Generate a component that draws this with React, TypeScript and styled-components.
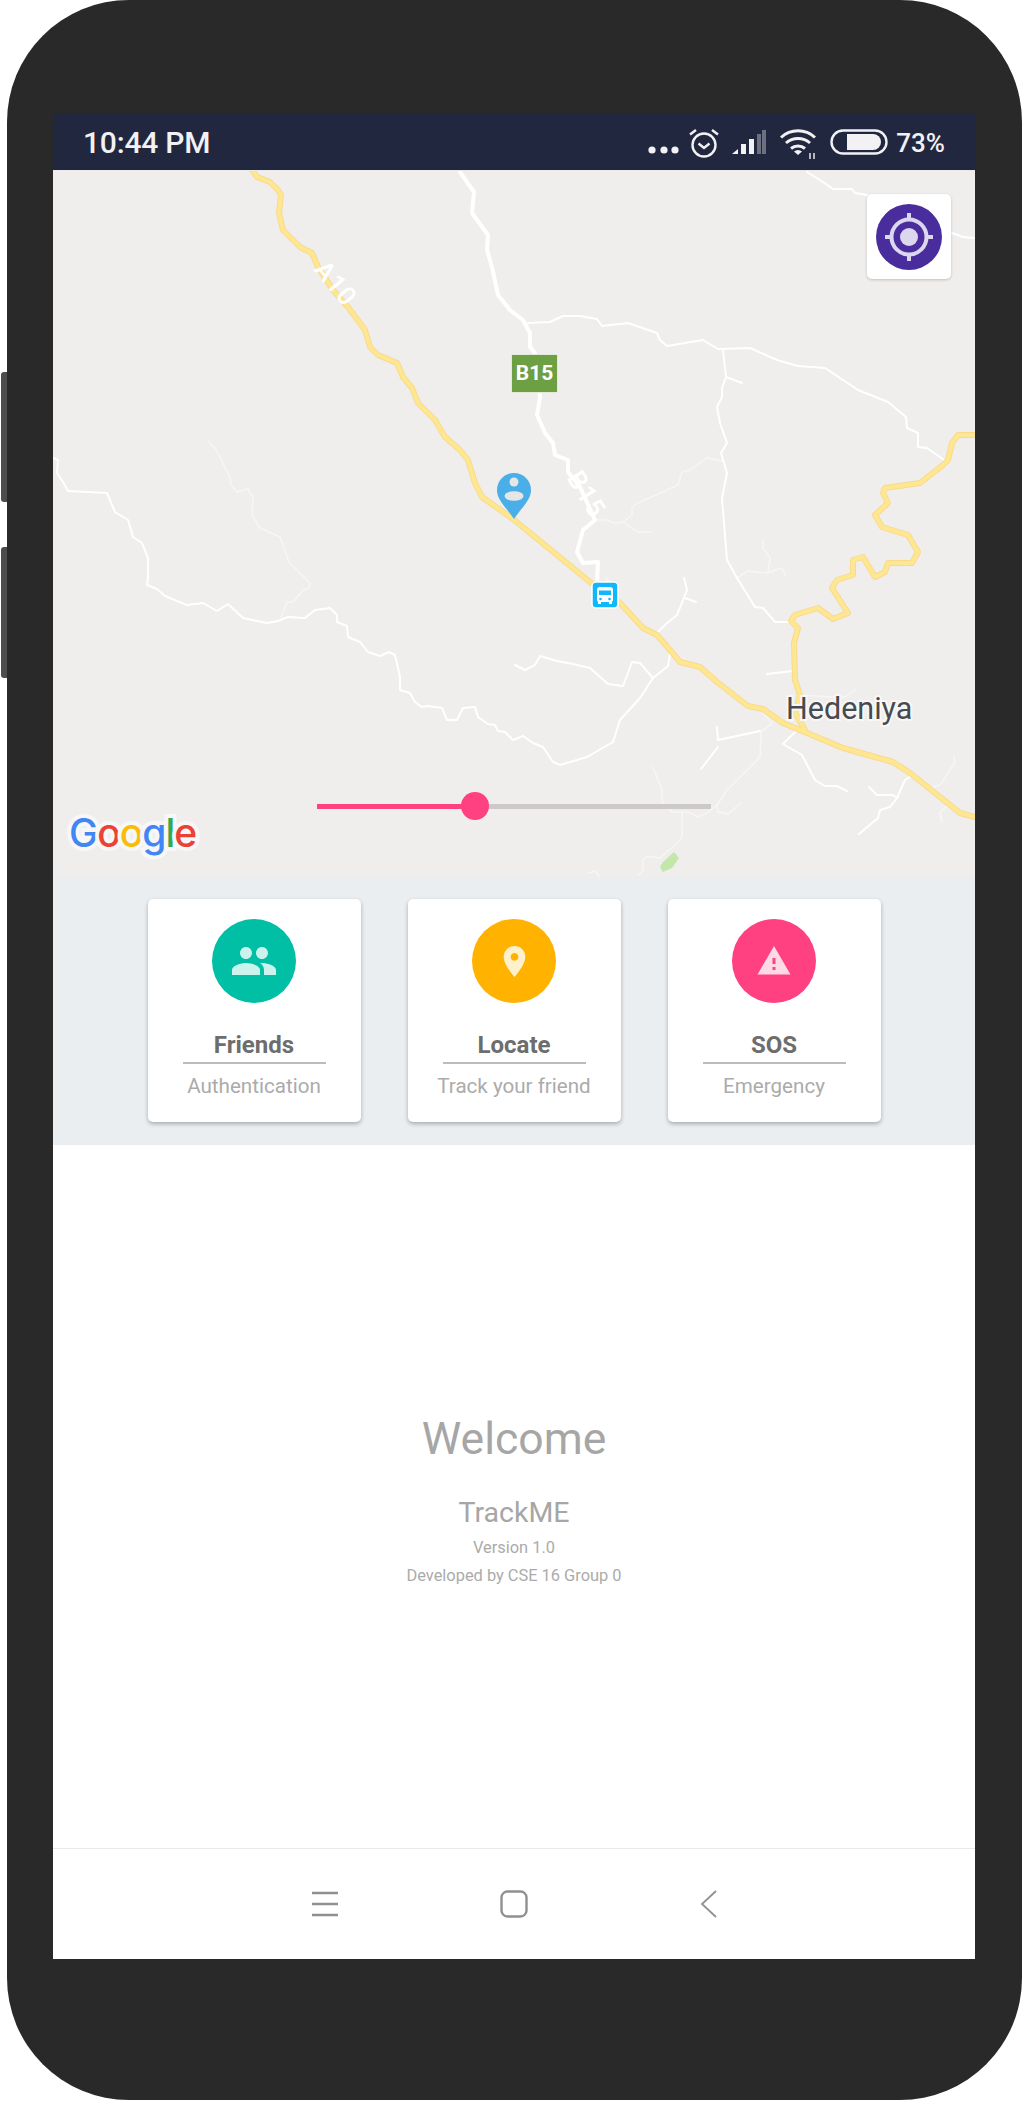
import React from 'react'
import styled, { createGlobalStyle } from 'styled-components'

const GlobalStyle = createGlobalStyle`
  html, body {
    margin: 0;
    padding: 0;
    background: #ffffff;
    font-family: Roboto, 'Liberation Sans', sans-serif;
  }
`

const yellowRoads = [
  '252,170 257,177 270,182 278,190 281,195 279,213 283,230 300,247 312,253 318,267 333,290 348,307 365,330 370,347 378,355 397,363 403,377 412,388 418,403 435,420 445,437 460,450 468,460 475,483 482,497 513,519 590,582 620,603 643,628 657,635 670,650 680,662 700,667 717,682 748,706 763,709 783,723 843,748 893,762 910,773 950,805 960,813 975,817',
  '975,435 958,435 952,443 948,460 943,465 920,483 885,488 883,493 888,503 875,515 882,527 908,535 918,552 912,563 888,563 885,572 875,577 863,557 853,560 853,575 837,580 832,588 848,613 833,619 818,608 795,615 791,621 798,628 794,643 795,680 800,695 795,713 805,730',
]

const mainRoads = [
  '460,172 474,192 472,213 488,235 487,250 492,267 498,295 510,310 523,320 530,333 530,347 535,353 540,397 537,415 545,433 553,443 555,455 568,460 568,472 580,487 595,520 583,530 577,552 583,563 598,562 597,582',
]

const sideRoads = [
  '528,323 550,322 563,316 580,316 597,319 602,326 628,323 657,333 660,340 667,346 685,343 703,340 718,349 750,348 777,360 798,366 825,368 858,390 888,402 906,417 907,428 918,433 918,447 927,448 947,462',
  '723,350 726,377 722,388 722,397 717,407 720,423 727,443 721,453 727,473 722,498 727,560 737,578 755,607 763,608 775,622 790,622',
  '726,377 742,383',
  '807,172 823,182 833,189 852,189 855,193 867,195',
  '952,233 963,237 975,238',
  '53,458 58,460 57,473 63,482 68,491 107,493 115,512 128,520 133,537 142,543 148,558 148,578 147,585 157,589 165,596 187,605 203,603 217,611 228,604 243,618 267,623 278,621 288,617 305,618 315,610 330,608 337,615 337,622 347,626 348,637 360,642 368,652 380,656 389,652 395,655 400,677 400,690 410,693 415,702 422,707 428,706 442,708 447,720 457,720 463,708 475,707 478,717 488,724 495,725 498,731 505,732 513,740 523,736 533,743 543,747 553,762 560,765 587,757 613,742 620,720 640,698 653,678 668,666 670,655',
  '515,665 525,670 535,665 540,656 557,661 568,663 590,668 608,684 623,686 632,662 640,663 653,678',
  '684,578 687,590 677,615 667,623 657,633',
  '685,598 696,602',
  '767,674 793,671',
  '797,730 783,744 802,755 815,780 825,786 837,786 847,791',
  '717,727 718,740 760,731',
  '718,747 701,769',
  '869,787 877,795 893,795 897,798 890,807 880,810 878,818 859,834',
  '897,798 905,780 910,777',
]

const thinRoads = [
  '208,441 215,448 230,477 231,485 237,492 248,489 253,497 252,515 260,528 280,537 289,562 310,583 309,588 303,590 293,602 287,602 280,620',
  '722,461 707,458 690,470 682,472 678,485 638,503 632,507 632,515 623,522 613,523 608,520 595,520',
  '623,522 638,532 652,532',
  '737,578 748,571 767,573 782,568 785,575',
  '763,540 763,548 770,558 768,572',
  '763,713 772,723 761,732 760,757 740,777 727,790 717,805 708,812 698,817 688,812 672,812 662,802 662,790 653,767',
  '717,805 718,812 728,814 741,803',
  '682,812 682,837 677,843 660,858 647,856 643,860 643,870 639,875',
  '930,788 940,785 947,775 955,762 954,756',
  '948,805 940,813 942,822',
  '802,695 830,697 845,697 855,690',
  '589,873 595,871 600,877',
  '606,577 610,584',
]

const cards = [
  {
    title: 'Friends',
    subtitle: 'Authentication',
    color: '#00bfa5',
    size: 48,
    icon: 'M16 11c1.66 0 2.99-1.34 2.99-3S17.66 5 16 5c-1.66 0-3 1.34-3 3s1.34 3 3 3zm-8 0c1.66 0 2.99-1.34 2.99-3S9.66 5 8 5C6.34 5 5 6.34 5 8s1.34 3 3 3zm0 2c-2.33 0-7 1.17-7 3.5V19h14v-2.5c0-2.33-4.67-3.5-7-3.5zm8 0c-.29 0-.62.02-.97.05 1.16.84 1.97 1.97 1.97 3.45V19h6v-2.5c0-2.33-4.67-3.5-7-3.5z',
  },
  {
    title: 'Locate',
    subtitle: 'Track your friend',
    color: '#ffb300',
    size: 37,
    icon: 'M12 2C8.13 2 5 5.13 5 9c0 5.25 7 13 7 13s7-7.75 7-13c0-3.87-3.13-7-7-7zm0 9.5c-1.38 0-2.5-1.12-2.5-2.5s1.12-2.5 2.5-2.5 2.5 1.12 2.5 2.5-1.12 2.5-2.5 2.5z',
  },
  {
    title: 'SOS',
    subtitle: 'Emergency',
    color: '#ff4081',
    size: 36,
    icon: 'M1 21h22L12 2 1 21zm12-3h-2v-2h2v2zm0-4h-2v-4h2v4z',
  },
]

const Phone = styled.div`
  position: relative;
  box-sizing: border-box;
  width: 1015px;
  height: 2100px;
  margin-left: 7px;
  padding: 113px 47px 0 46px;
  background: #292929;
  border-radius: 122px;
`

const SideButton = styled.div<{ $top: number; $height: number }>`
  position: absolute;
  left: -6px;
  top: ${(p) => p.$top}px;
  width: 6px;
  height: ${(p) => p.$height}px;
  background: #4c4c4c;
  border-radius: 3px 0 0 3px;
`

const Screen = styled.div`
  display: flex;
  flex-direction: column;
  width: 922px;
  height: 1846px;
  background: #ffffff;
`

const StatusBar = styled.header`
  display: flex;
  flex: none;
  align-items: center;
  justify-content: space-between;
  box-sizing: border-box;
  height: 58px;
  padding: 2px 30px 0 30px;
  background: #222740;
  border-bottom: 1px solid #e9e9ea;
  color: #f2f2f4;
`

const Clock = styled.span`
  font-size: 30px;
  font-weight: 500;
  letter-spacing: -0.2px;
`

const StatusRight = styled.div`
  display: flex;
  align-items: center;
  gap: 8px;
`

const Battery = styled.span`
  font-size: 26px;
  font-weight: 500;
`

const MapArea = styled.section`
  position: relative;
  flex: none;
  height: 706px;
  overflow: hidden;
  background: #efeeed;
`

const MapDrawing = styled.svg`
  display: block;
  width: 922px;
  height: 706px;
`

const RoadLabel = styled.text`
  fill: #ffffff;
  font-family: Roboto, sans-serif;
  font-size: 26px;
  font-weight: 500;
  letter-spacing: 1px;
`

const PlaceLabel = styled.text`
  fill: #474b50;
  font-family: Roboto, sans-serif;
  font-size: 30.5px;
  stroke: #f7f7f7;
  stroke-width: 4px;
  paint-order: stroke;
`

const LocateButton = styled.button`
  position: absolute;
  top: 23px;
  right: 24px;
  display: grid;
  place-items: center;
  width: 84px;
  height: 85px;
  padding: 0;
  border: 0;
  border-radius: 5px;
  background: #ffffff;
  box-shadow: 0 1px 3px rgba(0, 0, 0, 0.2);
`

const RouteSign = styled.div`
  position: absolute;
  left: 458px;
  top: 183px;
  box-sizing: border-box;
  width: 47px;
  height: 39px;
  border: 1px solid #e3eadb;
  background: #6d9f43;
  color: #ffffff;
  font-size: 21px;
  font-weight: 700;
  line-height: 37px;
  text-align: center;
`

const MapPin = styled.svg`
  position: absolute;
  left: 443px;
  top: 301px;
`

const BusStop = styled.svg`
  position: absolute;
  left: 538px;
  top: 410px;
`

const Slider = styled.div`
  position: absolute;
  left: 264px;
  top: 633px;
  width: 394px;
  height: 5px;
  background: #ccc9c8;
`

const SliderFill = styled.div`
  height: 100%;
  background: #ff4081;
`

const SliderThumb = styled.div`
  position: absolute;
  top: -12px;
  width: 28px;
  height: 28px;
  margin-left: -14px;
  border-radius: 50%;
  background: #ff4081;
`

const GoogleLogo = styled.div`
  position: absolute;
  left: 16px;
  top: 638px;
  font-family: Inter, Roboto, sans-serif;
  font-size: 39px;
  font-weight: 500;
  line-height: 48px;
  letter-spacing: -1px;
  -webkit-text-stroke: 8px #f7f7f7;
  paint-order: stroke fill;
`

const LogoLetter = styled.span<{ $color: string }>`
  color: ${(p) => p.$color};
`

const CardBand = styled.section`
  display: flex;
  flex: none;
  justify-content: center;
  gap: 47px;
  box-sizing: border-box;
  height: 268px;
  padding-top: 22px;
  background: #eaeef1;
`

const Card = styled.article`
  display: flex;
  flex-direction: column;
  align-items: center;
  box-sizing: border-box;
  width: 213px;
  height: 223px;
  padding-top: 20px;
  border-radius: 5px;
  background: #ffffff;
  box-shadow: 0 2px 4px rgba(0, 0, 0, 0.28);
`

const CardIcon = styled.div<{ $color: string }>`
  display: grid;
  place-items: center;
  width: 84px;
  height: 84px;
  border-radius: 50%;
  background: ${(p) => p.$color};

  svg {
    display: block;
    fill: rgba(255, 255, 255, 0.8);
  }
`

const CardTitle = styled.h3`
  width: 143px;
  margin: 29px 0 0;
  padding-bottom: 3px;
  border-bottom: 2px solid #bcbcbc;
  color: #6d6d6d;
  font-size: 24px;
  font-weight: 700;
  line-height: 27px;
  text-align: center;
`

const CardSubtitle = styled.p`
  margin: 9px 0 0;
  color: #ababab;
  font-size: 20.6px;
  line-height: 26px;
  white-space: nowrap;
`

const Welcome = styled.main`
  display: flex;
  flex: 1;
  flex-direction: column;
  align-items: center;
  padding-top: 268px;
  color: #a6a6a6;
`

const Heading = styled.h1`
  margin: 0;
  font-size: 44.5px;
  font-weight: 400;
  line-height: 52px;
`

const AppName = styled.h2`
  margin: 31px 0 4px;
  font-size: 28.5px;
  font-weight: 400;
  line-height: 34px;
`

const Note = styled.p`
  margin: 0;
  color: #ababab;
  font-size: 16.4px;
  line-height: 28px;
`

const NavBar = styled.nav`
  display: flex;
  flex: none;
  align-items: center;
  box-sizing: border-box;
  height: 111px;
  padding: 0 0 0 258px;
  gap: 161px;
  background: #ffffff;
  border-top: 1px solid #e9e9e9;

  svg {
    display: block;
    fill: none;
    stroke: #909090;
  }

  svg:last-child {
    margin-left: 6px;
  }
`

function Road({ points, width, color }: { points: string; width: number; color: string }) {
  return <polyline points={points} fill="none" stroke={color} strokeWidth={width} strokeLinejoin="round" strokeLinecap="round" />
}

function StatusIcons() {
  return (
    <svg width="240" height="36" viewBox="646 125 240 36" fill="none" stroke="#f2f2f4">
      <g fill="#f2f2f4" stroke="none">
        <circle cx="650" cy="150" r="3.6" />
        <circle cx="662" cy="150" r="3.6" />
        <circle cx="673" cy="150" r="3.6" />
      </g>
      <circle cx="702" cy="145" r="11.5" strokeWidth="2.4" />
      <path d="M696.5 143.5l5.500 4.500 5.500-4.500M688 134.500l6-4.500M710 130l6 4.500" strokeWidth="2.400" />
      <g fill="#f2f2f4" stroke="none">
        <path d="M730 154l6-5v5z" />
        <rect x="739" y="144" width="5" height="10" />
        <rect x="747" y="139" width="5" height="15" />
        <rect x="755" y="134" width="4" height="20" fill="#6d7080" />
        <rect x="760" y="130" width="4" height="24" fill="#6d7080" />
        <path d="M796 155l-4-3.500a6 6 0 0 1 8 0z" />
      </g>
      <path d="M779 137.500a25 25 0 0 1 34 0M784 143a18 18 0 0 1 24 0M789 148.500a11 11 0 0 1 14 0" strokeWidth="3" />
      <path d="M808 153v6M812 153v6" strokeWidth="1.400" />
      <rect x="829.500" y="130.500" width="55" height="23" rx="11.500" strokeWidth="2.400" />
      <path d="M845 134h26a8 8 0 0 1 8 8a8 8 0 0 1 -8 8h-26z" fill="#f2f2f4" stroke="none" />
    </svg>
  )
}

export default function App() {
  return (
    <>
      <GlobalStyle />
      <Phone>
        <SideButton $top={372} $height={130} />
        <SideButton $top={547} $height={131} />
        <Screen>
          <StatusBar>
            <Clock>10:44 PM</Clock>
            <StatusRight>
              <StatusIcons />
              <Battery>73%</Battery>
            </StatusRight>
          </StatusBar>

          <MapArea>
            <MapDrawing viewBox="53 171 922 706">
              {thinRoads.map((r) => (
                <Road key={r} points={r} width={1.5} color="#f6f6f5" />
              ))}
              {sideRoads.map((r) => (
                <Road key={r} points={r} width={2} color="#ffffff" />
              ))}
              {mainRoads.map((r) => (
                <Road key={r} points={r} width={4} color="#ffffff" />
              ))}
              {yellowRoads.map((r) => (
                <Road key={r} points={r} width={6} color="#f8da8c" />
              ))}
              {yellowRoads.map((r) => (
                <Road key={r} points={r} width={4} color="#ffe792" />
              ))}
              <path d="M674 852l5 6-7 10-9 4-3-5 3-5z" fill="#c3e6a9" />
              <RoadLabel transform="translate(313 270) rotate(50)">A10</RoadLabel>
              <RoadLabel transform="translate(566 478) rotate(58)">B15</RoadLabel>
              <PlaceLabel x="786" y="719">Hedeniya</PlaceLabel>
            </MapDrawing>

            <LocateButton>
              <svg width="66" height="66" viewBox="0 0 66 66">
                <circle cx="33" cy="33" r="33" fill="#4a2d9c" />
                <circle cx="33" cy="33" r="17.500" fill="none" stroke="#dcd7ee" strokeWidth="4" />
                <circle cx="33" cy="33" r="9" fill="#dcd7ee" />
                <path d="M33 9v8M33 49v8M9 33h8M49 33h8" stroke="#dcd7ee" strokeWidth="4" />
              </svg>
            </LocateButton>

            <RouteSign>B15</RouteSign>

            <MapPin width="36" height="48" viewBox="0 0 36 48">
              <path d="M18 47C10 35 1 28 1 18a17 17 0 0 1 34 0c0 10-9 17-17 29z" fill="#4aaee8" />
              <circle cx="18" cy="10" r="4.500" fill="#e6e6e6" />
              <ellipse cx="18" cy="24" rx="9.500" ry="4.800" fill="#e6e6e6" />
            </MapPin>

            <BusStop width="28" height="28" viewBox="0 0 28 28">
              <rect x="1" y="1" width="26" height="26" rx="4" fill="#10b8fb" stroke="#ffffff" strokeWidth="1.500" />
              <path d="M9 6h10a3 3 0 0 1 3 3v10a2 2 0 0 1-1 1.700V23h-3v-2h-8v2H7v-2.300A2 2 0 0 1 6 19V9a3 3 0 0 1 3-3z" fill="#ffffff" />
              <rect x="8" y="9.500" width="12" height="4.500" fill="#10b8fb" />
              <circle cx="9.500" cy="18" r="1.300" fill="#10b8fb" />
              <circle cx="18.500" cy="18" r="1.300" fill="#10b8fb" />
            </BusStop>

            <Slider>
              <SliderFill style={{ width: `${(158 / 394) * 100}%` }} />
              <SliderThumb style={{ left: `${(158 / 394) * 100}%` }} />
            </Slider>

            <GoogleLogo>
              <LogoLetter $color="#4285f4">G</LogoLetter>
              <LogoLetter $color="#ea4335">o</LogoLetter>
              <LogoLetter $color="#fbbc05">o</LogoLetter>
              <LogoLetter $color="#4285f4">g</LogoLetter>
              <LogoLetter $color="#34a853">l</LogoLetter>
              <LogoLetter $color="#ea4335">e</LogoLetter>
            </GoogleLogo>
          </MapArea>

          <CardBand>
            {cards.map((c) => (
              <Card key={c.title}>
                <CardIcon $color={c.color}>
                  <svg width={c.size} height={c.size} viewBox="0 0 24 24">
                    <path d={c.icon} />
                  </svg>
                </CardIcon>
                <CardTitle>{c.title}</CardTitle>
                <CardSubtitle>{c.subtitle}</CardSubtitle>
              </Card>
            ))}
          </CardBand>

          <Welcome>
            <Heading>Welcome</Heading>
            <AppName>TrackME</AppName>
            <Note>Version 1.0</Note>
            <Note>Developed by CSE 16 Group 0</Note>
          </Welcome>

          <NavBar>
            <svg width="28" height="28" viewBox="0 0 28 28" strokeWidth="2.500">
              <path d="M1 3h26M1 14h26M1 25h26" />
            </svg>
            <svg width="28" height="28" viewBox="0 0 28 28" strokeWidth="2.400">
              <rect x="1.500" y="1.500" width="25" height="25" rx="6" />
            </svg>
            <svg width="28" height="28" viewBox="0 0 28 28" strokeWidth="1.800">
              <path d="M21 1L7 14l14 13" />
            </svg>
          </NavBar>
        </Screen>
      </Phone>
    </>
  )
}
